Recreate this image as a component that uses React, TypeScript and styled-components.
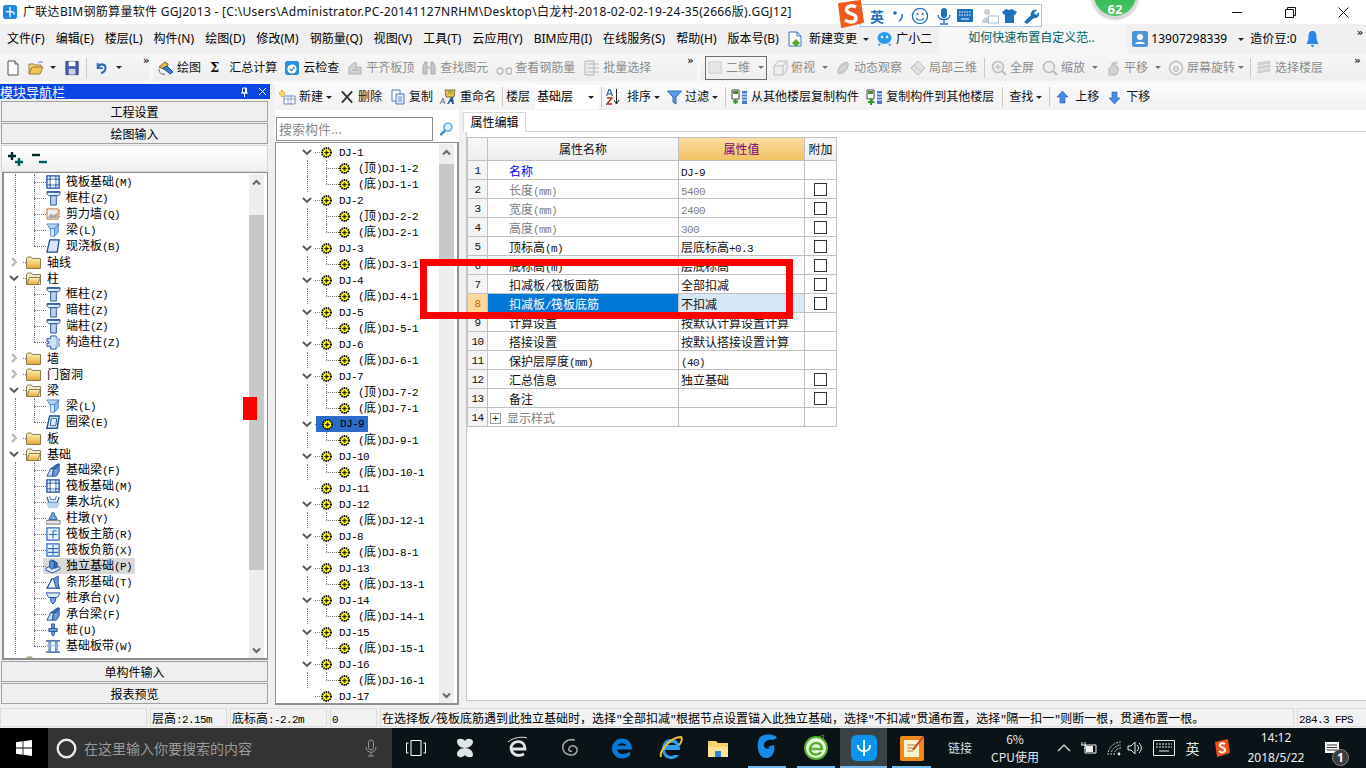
import React from "react";
import styled, { createGlobalStyle } from "styled-components";

const SANS = `"Noto Sans", "Noto Sans CJK SC", sans-serif`;
const CJK = `"Noto Sans CJK SC", sans-serif`;

const Global = createGlobalStyle`
  html, body { margin: 0; padding: 0; background: #f0f0f0; overflow: hidden; }
  #root { width: 1366px; height: 768px; }
  * { box-sizing: border-box; }
`;

const Page = styled.div`
  position: relative; width: 1366px; height: 768px; overflow: hidden; display: flex; flex-direction: column;
  background: #f0f0f0; color: #000; font: 12px/16px ${SANS};
`;

/* ---------- title ---------- */
const TitleBar = styled.div`
  height: 24px; background: #fff; display: flex; align-items: center; padding-left: 3px; white-space: nowrap; color: #111;
`;
const TitleText = styled.span`margin-left: 5px; letter-spacing: .3px; font-size: 12px;`;
const WinBtns = styled.div`margin-left: auto; display: flex;`;
const WinBtn = styled.div`width: 45px; height: 24px; display: flex; align-items: center; justify-content: center; margin-right: 8px; &:last-child{margin-right:0}`;

/* ---------- menu ---------- */
const MenuBar = styled.div`
  height: 30px; display: flex; align-items: center; padding-left: 7px; white-space: nowrap; background: #f0f0f0;
`;
const MenuItem = styled.span<{ $ml?: number }>`
  margin-left: ${p => p.$ml ?? 11}px; &:first-child { margin-left: 0; }
  display: inline-flex; align-items: center; gap: 3px; letter-spacing: .05px;
`;
const Notice = styled.div`
  width: 188px; height: 30px; margin-left: 7px; background: #f6f6f6; color: #006464; padding-left: 29px; line-height: 28px;
`;

/* ---------- toolbar row ---------- */
const ToolRow = styled.div`height: 30px; display: flex; align-items: stretch; background: #f8f8f8; padding-bottom: 3px;`;
const ToolGroup = styled.div<{ $w: number }>`
  width: ${p => p.$w}px; display: flex; align-items: center; white-space: nowrap; position: relative;
  background: linear-gradient(#f7f7f7, #eeeeee); border-radius: 0 4px 4px 0; margin-right: 3px; &:last-child { margin-right: 0; }
`;
const Tool = styled.span<{ $x: number; $off?: boolean }>`
  margin-left: ${p => p.$x}px; display: inline-flex; align-items: center; gap: 3px; flex: none;
  color: ${p => (p.$off ? "#8c8c8c" : "#111")};
`;
const Sep = styled.span<{ $x: number }>`
  margin-left: ${p => p.$x}px; width: 1px; height: 20px; background: #c8c8c8; flex: none;
`;
const More = styled.span<{ $x: number }>`margin-left: ${p => p.$x}px; font: bold 10px/10px "DejaVu Sans", sans-serif; align-self: flex-start; margin-top: 2px; color: #222; flex: none;`;
const MenuMore = styled(More)`margin-top: 0; margin-bottom: 12px; align-self: center;`;
const ComboBox = styled.span<{ $x: number }>`
  margin-left: ${p => p.$x}px; width: 62px; height: 24px; border: 1px solid #6e6e6e; display: inline-flex; align-items: center; padding-left: 2px; gap: 3px; color: #8c8c8c; flex: none;
`;
const Caret = styled.span<{ $c?: string }>`
  display: inline-block; width: 0; height: 0; border: 3px solid transparent; border-top: 3px solid ${p => p.$c ?? "#222"}; border-bottom: 0; flex: none;
`;

/* ---------- main ---------- */
const Main = styled.div`height: 622px; display: flex;`;
const NavPanel = styled.div`width: 270px; display: flex; flex-direction: column;`;
const NavHead = styled.div`
  height: 15px; background: #0a46e6; color: #fff; display: flex; align-items: center; font: 13px/15px ${CJK}; flex: none;
`;
const NavHeadBtns = styled.span`margin-left: auto; display: flex; gap: 9px; padding-right: 3px; align-items: center;`;
const NavButton = styled.div<{ $mt: number }>`
  height: 21px; margin: ${p => p.$mt}px 2px 0 1px; background: #efefef; border: 1px solid #a2a2a2; text-align: center; font: 12px/19px ${CJK}; flex: none;
`;
const NavTools = styled.div`
  height: 27px; margin: 1px 2px 0 1px; background: linear-gradient(#ffffff, #efefef); border: 1px solid #d8d8d8; display: flex; align-items: center; padding-left: 5px; gap: 7px; flex: none;
`;
const TreeBox = styled.div`
  height: 488px; margin: 0 2px 0 2px; border: 1px solid #8c8c8c; border-width: 1px 1px 2px 2px; background: #fff; display: flex; overflow: hidden; flex: none; padding-top: 1px;
`;
const TreeList = styled.div`flex: 1; min-width: 0; font: 12px/16px ${CJK}; white-space: nowrap; overflow: hidden;`;
const Row = styled.div`height: 16px; display: flex; align-items: center; flex: none;`;
const Indent = styled.span<{ $w: number }>`width: ${p => p.$w}px; flex: none;`;
const Guide = styled.span<{ $w: number; $off?: boolean }>`
  width: ${p => p.$w}px; height: 16px; flex: none; ${p => (p.$off ? "" : "border-left: 1px dotted #777;")}
`;
const Elbow = styled.span<{ $w: number; $last?: boolean }>`
  position: relative; width: ${p => p.$w}px; height: 16px; flex: none;
  &::before { content: ""; position: absolute; left: 0; top: 0; height: ${p => (p.$last ? 8 : 16)}px; border-left: 1px dotted #777; }
  &::after { content: ""; position: absolute; left: 0; top: 8px; width: 100%; border-top: 1px dotted #777; }
`;
const Stub = styled.span<{ $w: number }>`width: ${p => p.$w}px; flex: none; border-top: 1px dotted #777; height: 0;`;
const Label = styled.span<{ $ml: number }>`margin-left: ${p => p.$ml}px;`;
const SelBand = styled.span<{ $ml: number }>`
  margin-left: ${p => p.$ml}px; display: flex; align-items: center; background: #d9d9d9; height: 16px; padding: 0 3px 0 1px; gap: 5px;
`;
const Lat = styled.span`font: 11px/16px "Liberation Mono", monospace; letter-spacing: -.6px;`;
const Scroll = styled.div<{ $mr: number }>`
  position: relative; width: 15px; margin: 0 ${p => p.$mr}px 0 0; background: #eeeeee; flex: none;
`;
const Thumb = styled.div<{ $top: number; $h: number }>`
  position: absolute; left: 0; right: 0; top: ${p => p.$top}px; height: ${p => p.$h}px; background: #c8c8c8;
`;
const ScrollArrow = styled.svg<{ $top: number }>`position: absolute; left: 3px; top: ${p => p.$top}px;`;

const Right = styled.div`flex: 1; margin-left: 5px; display: flex; flex-direction: column; min-width: 0;`;
const Toolbar2 = styled.div`
  height: 26px; display: flex; align-items: center; white-space: nowrap; background: linear-gradient(#fbfbfb, #f1f1f1); flex: none;
`;
const FloorCombo = styled.span`margin-left: 5px; width: 64px; height: 24px; background: #fff; display: inline-flex; align-items: center; padding: 0 5px 0 2px; justify-content: space-between; flex: none;`;
const Content = styled.div`flex: 1; display: flex; min-height: 0;`;
const CompPanel = styled.div`width: 184px; display: flex; flex-direction: column; flex: none;`;
const SearchRow = styled.div`height: 32px; background: #fff; display: flex; align-items: flex-end; padding: 0 0 1px 1px; flex: none;`;
const SearchInput = styled.div`
  width: 157px; height: 24px; border: 1px solid #8c8c8c; color: #8a8a8a; font: 13px/22px ${CJK}; padding-left: 2px; background: #fff;
`;
const SearchBtn = styled.div`flex: 1; height: 24px; display: flex; align-items: center; justify-content: center;`;
const CompTree = styled.div`
  height: 563px; border: 1px solid #8f8f96; border-width: 1px 2px 2px 1px; background: #fff; display: flex; overflow: hidden; padding-top: 1px; flex: none;
`;
const SelName = styled.span`margin-left: -5px; background: #2d6bc9; color: #000; height: 16px; display: inline-flex; align-items: center; padding: 0 4px 0 6px; gap: 7px;`;

const PropPanel = styled.div`flex: 1; margin-left: 4px; display: flex; flex-direction: column; min-width: 0;`;
const TabLine = styled.div`height: 22px; display: flex; align-items: flex-end; background: #fff; flex: none; padding-top: 2px;`;
const Tab = styled.div`
  width: 63px; height: 20px; background: #fff; border: 1px solid #d8d8d8; border-bottom: 0; text-align: center; font: 12px/18px ${CJK}; flex: none;
`;
const TabRule = styled.div`flex: 1; border-bottom: 1px solid #d8d8d8;`;
const PropBody = styled.div`
  height: 569px; margin-left: 3px; background: #fff; border-left: 1px solid #c8c8c8; border-bottom: 1px solid #c8c8c8; padding-top: 5px; flex: none;
`;
const Grid = styled.div`
  display: grid; width: 370px; grid-template-columns: 20px 191px 126px 32px; grid-auto-rows: 19px; grid-template-rows: 23px;
  border-top: 1px solid #c0c0c0; border-left: 1px solid #c0c0c0; font: 12px/18px ${CJK};
`;
const Cell = styled.div<{ $bg?: string; $c?: string; $pl?: number; $center?: boolean }>`
  border-right: 1px solid #c0c0c0; border-bottom: 1px solid #c0c0c0; background: ${p => p.$bg ?? "#fff"}; color: ${p => p.$c ?? "#111"};
  padding-left: ${p => p.$pl ?? 0}px; padding-top: 2px; white-space: nowrap; overflow: hidden; display: flex; align-items: center;
  justify-content: ${p => (p.$center ? "center" : "flex-start")};
`;
const CheckCell = styled(Cell)`padding-top: 0;`;
const HeadCell = styled(Cell)<{ $hot?: boolean }>`
  background: ${p => (p.$hot ? "linear-gradient(#fbdda2,#f2c264)" : "linear-gradient(#f8f8f8,#eeeeee)")};
  color: ${p => (p.$hot ? "#80007a" : "#111")}; padding-top: 0;
`;
const Check = styled.span`width: 13px; height: 13px; border: 1px solid #333; background: #fff; display: block;`;
const PlusBox = styled.span`
  width: 11px; height: 11px; border: 1px solid #999; color: #222; font: 11px/9px "Liberation Sans", sans-serif; text-align: center; margin-right: 6px; flex: none;
`;

/* ---------- status ---------- */
const Status = styled.div`height: 22px; display: flex; align-items: flex-start; padding-top: 2px; gap: 3px; background: #f0f0f0; flex: none; font: 12px/17px ${CJK}; white-space: nowrap;`;
const StatusCell = styled.div<{ $w: number }>`
  width: ${p => p.$w}px; height: 19px; border: 1px solid #dcdcdc; padding-left: 1px; overflow: hidden; flex: none; background: #f2f2f2;
`;

/* ---------- taskbar ---------- */
const Taskbar = styled.div`
  height: 40px; background: #0a1418; display: flex; align-items: center; color: #e8e8e8; position: relative; flex: none;
`;
const StartBtn = styled.div`width: 48px; height: 40px; background: #000; display: flex; align-items: center; justify-content: center; flex: none;`;
const SearchBar = styled.div`
  width: 344px; height: 40px; background: #333333; display: flex; align-items: center; color: #9a9a9a; font: 14px/16px ${CJK}; padding-left: 8px; gap: 7px; flex: none;
`;
const MicBox = styled.span`margin-left: auto; margin-right: 15px; display: flex;`;
const App_ = styled.div<{ $w: number; $on?: boolean; $line?: number }>`
  width: ${p => p.$w}px; height: 40px; display: flex; align-items: center; justify-content: center; flex: none; position: relative;
  background: ${p => (p.$on ? "#3a4245" : "transparent")};
  ${p => p.$line ? `&::after{content:"";position:absolute;left:50%;bottom:0;width:${p.$line}px;margin-left:-${p.$line / 2}px;height:2px;background:#76b9ed;}` : ""}
`;
const LinkText = styled.span`margin-left: 12px; width: 24px; font: 12px/14px ${CJK}; color: #ddd; flex: none; white-space: nowrap;`;
const Cpu = styled.div`margin-left: 12px; width: 62px; text-align: center; font: 12px/18px ${CJK}; color: #e8e8e8; flex: none;`;
const Tray = styled.div`display: flex; align-items: center; margin-left: 6px; flex: none;`;
const TraySlot = styled.span<{ $w: number }>`width: ${p => p.$w}px; display: flex; justify-content: center; align-items: center; font: 14px/16px ${CJK}; flex: none;`;
const Clock = styled.div`width: 66px; text-align: center; font: 12px/20px ${SANS}; color: #eee; flex: none;`;
const Notify = styled.div`margin-left: 15px; position: relative; width: 24px; height: 30px; flex: none; padding-top: 8px;`;
const NotifyBadge = styled.span`
  position: absolute; left: 8px; top: 16px; width: 17px; height: 17px; border-radius: 50%; background: #3c3c3c; border: 1px solid #888; color: #fff; font: bold 12px/15px ${SANS}; text-align: center;
`;

/* ---------- overlays ---------- */
const RedFrame = styled.div`
  position: absolute; left: 420px; top: 259px; width: 373px; height: 60px; border: 7px solid #ff0000; pointer-events: none;
`;
const RedBlock = styled.div`position: absolute; left: 243px; top: 397px; width: 14px; height: 23px; background: #ff0000;`;
const Badge = styled.div`
  position: absolute; left: 1092px; top: -28px; width: 46px; height: 46px; border-radius: 50%; background: linear-gradient(#2aa648, #46c766);
  border: 2px solid #d8d8d8; box-shadow: 0 1px 3px #0005; color: #fff; font: bold 13px/14px ${SANS}; text-align: center; padding-top: 28px;
`;
const Sogou = styled.div`position: absolute; left: 836px; top: 0; display: flex; align-items: flex-start; height: 28px;`;
const SogouLogo = styled.span`position: relative; z-index: 1; flex: none;`;
const SogouBar = styled.div`
  margin: 4px 0 0 -4px; width: 182px; height: 23px; background: #fff; border: 1px solid #a8c6e6; display: flex; align-items: center; padding-left: 9px; color: #1f6fc0;
`;
const SogouSlot = styled.span<{ $ml?: number }>`margin-left: ${p => p.$ml ?? 0}px; display: flex; justify-content: center; font: bold 14px/16px ${CJK}; color: #1f6fc0; flex: none;`;

/* ---------- helpers ---------- */
const Mix = ({ t }: { t: string }) => (
  <>
    {t.split(/([\x00-\x7f]+)/).map((p, i) =>
      /^[\x00-\x7f]+$/.test(p) ? <Lat key={i}>{p}</Lat> : p
    )}
  </>
);

const S = ({ w = 16, h = 16, vb = "0 0 16 16", children }: any) => (
  <svg width={w} height={h} viewBox={vb} style={{ flex: "none", display: "block" }}>{children}</svg>
);

/* tree icons */
const IcColumn = () => (
  <S w={15} h={15}>
    <path d="M1 1h14v2l-2 2H3L1 3z" fill="#dfe9f8" stroke="#1d4f9f" />
    <path d="M5 5h6v10H5z" fill="#bcd2f0" stroke="#1d4f9f" />
    <path d="M1 1h14" stroke="#1d4f9f" strokeWidth="1.5" />
  </S>
);
const IcGrid = () => (
  <S w={15} h={15}>
    <path d="M1 1h13v13H1z" fill="#eef4fc" stroke="#1d4f9f" strokeWidth="1.4" />
    <path d="M4.5 1v13M10.5 1v13M1 4.5h13M1 10.5h13" stroke="#1d4f9f" />
    <path d="M5 5h5v5H5z" fill="#fff" />
  </S>
);
const IcWall = () => (
  <S w={15} h={15}>
    <path d="M1 2h12v11H1z" fill="#f4efe8" stroke="#c07030" />
    <path d="M2 12l3-5 3 2 4-3v6z" fill="#a8a8a8" />
    <path d="M14 4h1M14 7h1M14 10h1" stroke="#d07020" strokeWidth="1.5" />
  </S>
);
const IcBeam = () => (
  <S w={15} h={15}>
    <path d="M1 1h13l-3 5H4z" fill="#b8d6f4" stroke="#4a88cc" />
    <path d="M5 6h4v8H5z" fill="#e4f0fc" stroke="#4a88cc" />
    <path d="M9 6l4-5v9l-4 4z" fill="#8fbbe8" stroke="#4a88cc" />
  </S>
);
const IcSlab = () => (
  <S w={15} h={15}>
    <path d="M4 1h10l-2 13H1z" fill="#d8e6f8" stroke="#1d4f9f" strokeWidth="1.4" />
  </S>
);
const IcRing = () => (
  <S w={15} h={15}>
    <path d="M4 1h10l-2 13H1z" fill="#fff" stroke="#1d4f9f" strokeWidth="1.6" />
    <path d="M5.5 3.5h6l-1 8h-6z" fill="#dde9f8" stroke="#1d4f9f" />
  </S>
);
const IcCons = () => (
  <S w={15} h={15}>
    <path d="M5 1h6v3h3v3h-2v2h2v3h-3v3H5v-3H1V9h2V7H1V4h4z" fill="#cfe0f6" stroke="#1d4f9f" />
    <path d="M11 2l3 2v8l-3 3z" fill="#9fbfe8" />
  </S>
);
const IcFoundBeam = () => (
  <S w={15} h={15}>
    <path d="M1 14l4-8h3l-1 8z" fill="#cfe0f6" stroke="#1d4f9f" />
    <path d="M5 6l7-5h2l-3 5z" fill="#3d78c4" stroke="#1d4f9f" />
    <path d="M8 6h3l3-5v8l-3 5H7z" fill="#6b9ad6" stroke="#1d4f9f" />
  </S>
);
const IcPit = () => (
  <S w={15} h={15}>
    <path d="M1 2l2 6h9l2-6" fill="none" stroke="#2c60b0" strokeWidth="1.4" />
    <path d="M4 1l1 4h5l1-4" fill="none" stroke="#2c60b0" />
    <path d="M0 8h15l-3 6H3z" fill="#b9d2ee" />
  </S>
);
const IcPier = () => (
  <S w={15} h={15}>
    <path d="M6 2h3v3h1l2 4H3l2-4h1z" fill="#7ea8dc" stroke="#2a5ca8" />
    <path d="M0 10h15v4H0z" fill="#e4e4e4" stroke="#777" />
  </S>
);
const IcMain = () => (
  <S w={15} h={15}>
    <path d="M1 1h13v13H1z" fill="#eaf2fc" stroke="#2a6cc0" strokeWidth="1.3" />
    <path d="M3 8h9M7.5 4v8M7.5 4h4" stroke="#2a6cc0" strokeWidth="1.2" fill="none" />
  </S>
);
const IcNeg = () => (
  <S w={15} h={15}>
    <path d="M1 1h13v13H1z" fill="#eaf2fc" stroke="#2a6cc0" strokeWidth="1.3" />
    <path d="M2 6h11M2 10h11M7.5 2v11" stroke="#2a6cc0" strokeWidth="1.2" />
  </S>
);
const IcIso = () => (
  <S w={17} h={15}>
    <path d="M1 10l7-4 8 3v2l-8 4-7-3z" fill="#dbe8f8" stroke="#1d4f9f" />
    <path d="M5 2h5v7l-2.5 2L5 9z" fill="#5e90d0" stroke="#1d4f9f" />
    <path d="M7 1l6 3v5l-3 1V3z" fill="#3a6cb4" stroke="#1d4f9f" />
  </S>
);
const IcStrip = () => (
  <S w={15} h={15}>
    <path d="M1 14l4-7 1-3h3l1 3 4 7z" fill="#fff" stroke="#1d4f9f" strokeWidth="1.3" />
    <path d="M8 4l5-3v8l1 5h-3z" fill="#6b9ad6" stroke="#1d4f9f" />
  </S>
);
const IcCap = () => (
  <S w={15} h={15}>
    <path d="M0 2h15l-3 5H3z" fill="#dfe9f8" stroke="#1d4f9f" />
    <path d="M5 7h5v4l-2.5 3L5 11z" fill="#7ea8dc" stroke="#1d4f9f" />
  </S>
);
const IcPile = () => (
  <S w={15} h={15}>
    <path d="M6 1h3v4H6zM3 6h9v3H3zM6 9h3v3l-1.5 2L6 12z" fill="#7ea8dc" stroke="#1d4f9f" />
  </S>
);
const IcBand = () => (
  <S w={15} h={15}>
    <path d="M0 2h15M0 14h15" stroke="#1d4f9f" strokeWidth="1.4" />
    <path d="M3 3h2v10H3zM10 3h2v10h-2z" fill="#8fb4e4" stroke="#2a5ca8" strokeWidth=".6" />
    <path d="M1 7h13" stroke="#8fb4e4" />
  </S>
);
const Folder = ({ open }: { open?: boolean }) => (
  <S w={15} h={13} vb="0 0 15 13">
    <defs>
      <linearGradient id="fg" x1="0" y1="0" x2="0" y2="1">
        <stop offset="0" stopColor="#fff3c0" />
        <stop offset="1" stopColor="#e8a92c" />
      </linearGradient>
    </defs>
    <path d="M.5 12.5V2.5l1-1.5h4l1 1.5h8v10z" fill={open ? "#f4e8c8" : "url(#fg)"} stroke="#8a7a58" />
    {open && <path d="M.5 12.5l3-7h11l-3 7z" fill="url(#fg)" stroke="#8a7a58" />}
  </S>
);
const ChevR = () => (
  <S w={10} h={10} vb="0 0 10 10"><path d="M3 1l4 4-4 4" fill="none" stroke="#b4b4b4" strokeWidth="2" /></S>
);
const ChevD = () => (
  <S w={10} h={10} vb="0 0 10 10"><path d="M1 3l4 4 4-4" fill="none" stroke="#555" strokeWidth="1.8" /></S>
);
const Gear = () => (
  <S w={11} h={11} vb="0 0 11 11">
    <circle cx="5.5" cy="5.5" r="4.5" fill="#ffff00" stroke="#000" strokeWidth="1.8" strokeDasharray="1.4 .8" />
    <circle cx="5.5" cy="5.5" r="1.6" fill="#333" />
    <path d="M5.5 1v9M1 5.5h9" stroke="#000" strokeWidth=".6" strokeDasharray="1 1" />
  </S>
);

const icons: Record<string, () => React.JSX.Element> = {
  col: IcColumn, grid: IcGrid, wall: IcWall, beam: IcBeam, slab: IcSlab, ring: IcRing, cons: IcCons, fb: IcFoundBeam,
  pit: IcPit, pier: IcPier, main: IcMain, neg: IcNeg, iso: IcIso, strip: IcStrip, cap: IcCap, pile: IcPile, band: IcBand,
};

type NavRow = { f?: "open" | "closed"; t: string; i?: string; last?: boolean; sel?: boolean };
const navRows: NavRow[] = [
  { t: "筏板基础(M)", i: "grid" }, { t: "框柱(Z)", i: "col" }, { t: "剪力墙(Q)", i: "wall" }, { t: "梁(L)", i: "beam" }, { t: "现浇板(B)", i: "slab", last: true },
  { f: "closed", t: "轴线" }, { f: "open", t: "柱" },
  { t: "框柱(Z)", i: "col" }, { t: "暗柱(Z)", i: "col" }, { t: "端柱(Z)", i: "col" }, { t: "构造柱(Z)", i: "cons", last: true },
  { f: "closed", t: "墙" }, { f: "closed", t: "门窗洞" }, { f: "open", t: "梁" },
  { t: "梁(L)", i: "beam" }, { t: "圈梁(E)", i: "ring", last: true },
  { f: "closed", t: "板" }, { f: "open", t: "基础" },
  { t: "基础梁(F)", i: "fb" }, { t: "筏板基础(M)", i: "grid" }, { t: "集水坑(K)", i: "pit" }, { t: "柱墩(Y)", i: "pier" }, { t: "筏板主筋(R)", i: "main" }, { t: "筏板负筋(X)", i: "neg" },
  { t: "独立基础(P)", i: "iso", sel: true }, { t: "条形基础(T)", i: "strip" }, { t: "桩承台(V)", i: "cap" }, { t: "承台梁(F)", i: "fb" }, { t: "桩(U)", i: "pile" }, { t: "基础板带(W)", i: "band", last: true },
  { f: "closed", t: "" },
];

const compRows: [string, string[]][] = [
  ["DJ-1", ["(顶)DJ-1-2", "(底)DJ-1-1"]], ["DJ-2", ["(顶)DJ-2-2", "(底)DJ-2-1"]], ["DJ-3", ["(底)DJ-3-1"]], ["DJ-4", ["(底)DJ-4-1"]],
  ["DJ-5", ["(底)DJ-5-1"]], ["DJ-6", ["(底)DJ-6-1"]], ["DJ-7", ["(顶)DJ-7-2", "(底)DJ-7-1"]], ["DJ-9", ["(底)DJ-9-1"]], ["DJ-10", ["(底)DJ-10-1"]],
  ["DJ-11", []], ["DJ-12", ["(底)DJ-12-1"]], ["DJ-8", ["(底)DJ-8-1"]], ["DJ-13", ["(底)DJ-13-1"]], ["DJ-14", ["(底)DJ-14-1"]], ["DJ-15", ["(底)DJ-15-1"]],
  ["DJ-16", ["(底)DJ-16-1"]], ["DJ-17", []],
];

type P = { n: number; name: string; val: string; chk?: boolean; c?: string; valc?: string; plus?: boolean; sel?: boolean };
const props: P[] = [
  { n: 1, name: "名称", val: "DJ-9", c: "#0000ff" },
  { n: 2, name: "长度(mm)", val: "5400", chk: true, c: "#808080", valc: "#808080" },
  { n: 3, name: "宽度(mm)", val: "2400", chk: true, c: "#808080", valc: "#808080" },
  { n: 4, name: "高度(mm)", val: "300", chk: true, c: "#808080", valc: "#808080" },
  { n: 5, name: "顶标高(m)", val: "层底标高+0.3", chk: true },
  { n: 6, name: "底标高(m)", val: "层底标高", chk: true },
  { n: 7, name: "扣减板/筏板面筋", val: "全部扣减", chk: true },
  { n: 8, name: "扣减板/筏板底筋", val: "不扣减", chk: true, sel: true },
  { n: 9, name: "计算设置", val: "按默认计算设置计算" },
  { n: 10, name: "搭接设置", val: "按默认搭接设置计算" },
  { n: 11, name: "保护层厚度(mm)", val: "(40)" },
  { n: 12, name: "汇总信息", val: "独立基础", chk: true },
  { n: 13, name: "备注", val: "", chk: true },
  { n: 14, name: "显示样式", val: "", c: "#808080", plus: true },
];

/* toolbar icons */
const Doc = () => <S><path d="M3 1h7l3 3v11H3z" fill="#fff" stroke="#555" /><path d="M10 1v3h3" fill="#ddd" stroke="#555" /></S>;
const OpenF = () => <S w={18}><path d="M1 14V4h5l1 1h6v2" fill="#f0d890" stroke="#9a7a30" /><path d="M1 14l3-7h11l-3 7z" fill="#f2c454" stroke="#9a7a30" /><path d="M10 3c2-2 4-1 5 0" stroke="#3a7ac8" fill="none" /></S>;
const Save = () => <S w={15}><path d="M1 1h13v14H1z" fill="#4a5fb0" stroke="#2c3a80" /><path d="M4 1h7v5H4z" fill="#fff" /><path d="M4 9h7v6H4z" fill="#c8d0e8" /></S>;
const Undo = () => <S w={14}><path d="M3 2v6h6" fill="none" stroke="#2c6cc0" strokeWidth="2" /><path d="M3 8c2-6 9-5 9 0 0 3-2 5-5 6" fill="none" stroke="#2c6cc0" strokeWidth="2.4" /></S>;
const DrawI = () => <S w={18}><path d="M2 7l6-5 3 2-2 6z" fill="#e4b84c" stroke="#7a6020" /><path d="M6 8l7 6 3-2-6-6z" fill="#3d78c8" stroke="#1d4f9f" /><path d="M2 9c0 4 3 6 6 5" fill="none" stroke="#555" /></S>;
const CloudI = () => <S><rect x="1" y="1" width="14" height="14" rx="2" fill="#2e90dc" /><circle cx="8" cy="9" r="4.6" fill="#fff" /><path d="M5.8 9l1.6 1.6L10.5 7" fill="none" stroke="#2e90dc" strokeWidth="1.4" /></S>;
const Grey1 = () => <S><path d="M2 14V7l6-5 2 2-2 3h6v7z" fill="#d4d4d4" stroke="#b0b0b0" /><path d="M5 10h7" stroke="#aaa" /></S>;
const Binoc = () => <S><path d="M2 14V6l2-4h2v12zM10 14V2h2l2 4v8z" fill="#c8c8c8" stroke="#aaa" /><path d="M6 6h4v3H6z" fill="#ccc" /></S>;
const Glasses = () => <S><path d="M1 11a3 3 0 106 0 3 3 0 10-6 0M10 11a3 3 0 106 0 3 3 0 10-6 0" fill="none" stroke="#b8b8b8" strokeWidth="1.3" /></S>;
const Batch = () => <S><path d="M1 1h9v14H1z" fill="#eee" stroke="#b4b4b4" /><path d="M3 4h12M3 8h12M3 12h12" stroke="#bbb" /></S>;
const Cube = () => <S><path d="M2 6h9v9H2zM2 6l4-5h9l-4 5M11 15l4-5V1" fill="#eee" stroke="#bdbdbd" /></S>;
const Orbit = () => <S><ellipse cx="8" cy="8" rx="3.5" ry="7" transform="rotate(40 8 8)" fill="#d6d6d6" stroke="#b8b8b8" /><ellipse cx="8" cy="8" rx="6" ry="2" transform="rotate(-40 8 8)" fill="none" stroke="#c4c4c4" /></S>;
const Local = () => <S><path d="M1 8l7-7 7 7-7 7z" fill="#e2e2e2" stroke="#b8b8b8" /><path d="M4 5l7 7M8 1l7 7" stroke="#c4c4c4" /></S>;
const Mag = ({ p }: { p?: boolean }) => <S><circle cx="7" cy="7" r="5.5" fill="#eee" stroke="#b8b8b8" strokeWidth="1.4" /><path d="M11 11l4 4" stroke="#b8b8b8" strokeWidth="2" />{p && <path d="M4 7h6M7 4v6" stroke="#b4b4b4" />}</S>;
const Pan = () => <S><path d="M4 15V8l3-2V3l2 0 1 3 3 1v5l-2 3z" fill="#d2d2d2" stroke="#b4b4b4" /><path d="M11 1v4M9 3h4" stroke="#bbb" /></S>;
const Rot = () => <S><circle cx="8" cy="8" r="6.5" fill="#f2f2f2" stroke="#bcbcbc" strokeWidth="1.4" /><circle cx="8" cy="9" r="2.6" fill="#ddd" stroke="#bbb" /></S>;
const Floors = () => <S><path d="M2 11l12-2v2L2 13zM2 7l12-2v2L2 9zM2 3l12-2v2L2 5z" fill="#dadada" stroke="#bdbdbd" strokeWidth=".7" /></S>;
const NewI = () => <S w={18} vb="0 0 18 16"><path d="M6 7h11v8H6z" fill="#fff" stroke="#6a86b8" /><path d="M6 10h11M10 7v8M13 7v8" stroke="#6a86b8" strokeWidth=".7" /><path d="M4 1v7M1 4.5h6" stroke="#e8b020" strokeWidth="2.4" /><path d="M4 2v5M2 4.5h4" stroke="#ffe890" /></S>;
const DelI = () => <S w={15}><path d="M2 2l11 12M13 2L2 14" stroke="#333" strokeWidth="2" /></S>;
const CopyI = () => <S><path d="M2 1h8v11H2z" fill="#fff" stroke="#4b76b8" /><path d="M6 5h8v10H6z" fill="#e4eefa" stroke="#4b76b8" /><path d="M8 8h4M8 10h4M8 12h4" stroke="#4b76b8" strokeWidth=".8" /></S>;
const RenameI = () => <S w={18} vb="0 0 18 16"><path d="M6 1h10l-1 7H7z" fill="#e8c04c" stroke="#8a7030" /><path d="M9 2h5M9 4h5" stroke="#7a9a30" /><path d="M1 15l3-6 2 6M2 13h3" fill="none" stroke="#777" /><path d="M8 15l4-7h2l1 7h-2l-.2-2h-2l-1 2z" fill="#2c5ca8" /></S>;
const Sort = () => <S w={14} vb="0 0 14 16"><path d="M.5 7L3 .5h1L6.5 7M1.5 5h4" fill="none" stroke="#2c5ca8" strokeWidth="1.2" /><path d="M1 9h5L1 15h5" fill="none" stroke="#b03020" strokeWidth="1.4" /><path d="M10.5 0v14M8 11l2.5 4 2.5-4" fill="none" stroke="#222" /></S>;
const Funnel = () => <S w={15} h={16} vb="0 0 14 16"><path d="M0 2h14L8.5 8v7l-3-2V8z" fill="#5a9ce8" stroke="#2c6cc0" /></S>;
const CopyFrom = ({ flip }: { flip?: boolean }) => <S w={17} vb="0 0 17 16"><path d="M1 1h7v9H1z" fill="#fff" stroke="#444" /><path d="M2 2h5v3H2z" fill="#4a8a3c" /><path d="M11 2h5v13h-5z" fill="#4a7ac8" /><path d="M11 5h5M11 8h5M11 11h5" stroke="#fff" /><path d={flip ? "M2 13h5l-2-2v5" : "M4.5 10v5M2 12.5h5"} stroke="#2a9a2a" strokeWidth="2" fill="none" /></S>;
const Arrow = ({ down }: { down?: boolean }) => <S w={11} h={13} vb="0 0 11 13"><path d={down ? "M3 1h5v6h3l-5.5 6L0 7h3z" : "M3 12h5V6h3L5.5 0 0 6h3z"} fill="#4a8ae0" stroke="#2a5ca8" strokeWidth=".6" /></S>;
const NewDoc = () => <S w={16}><path d="M2 1h8l4 4v10H2z" fill="#fff" stroke="#3a78c8" /><path d="M10 1v4h4" fill="none" stroke="#3a78c8" /><path d="M9 8l4 4-4 4-4-4z" fill="#58a828" /></S>;
const Bot = () => <S w={17} vb="0 0 17 16"><ellipse cx="8.5" cy="7" rx="7" ry="6" fill="#2a9ae8" /><path d="M3 12l-1 3 3-1M14 12l1 3-3-1" fill="#2a9ae8" /><circle cx="6" cy="6" r="1.2" fill="#fff" /><circle cx="11" cy="6" r="1.2" fill="#fff" /></S>;
const UserI = () => <S><rect width="16" height="16" rx="2" fill="#4b94d8" /><circle cx="8" cy="6" r="3" fill="#fff" /><path d="M3 13c1-3 9-3 10 0z" fill="#fff" /></S>;
const Bell = () => <S w={13} h={18} vb="0 0 13 18"><path d="M6.5 1c-3 0-4 2-4 6 0 3-1 5-2 7h12c-1-2-2-4-2-7 0-4-1-6-4-6z" fill="#2a86e8" /><path d="M4.5 15h4l-2 2.5z" fill="#2a86e8" /></S>;
const SearchI = () => <S w={15} h={15}><circle cx="9.5" cy="5.5" r="4.2" fill="#e8f4fc" stroke="#5ab0e8" strokeWidth="1.8" /><path d="M6.5 9L1.5 14" stroke="#2b80d0" strokeWidth="2.4" /></S>;

const NavRowView = ({ r, guide }: { r: NavRow; guide: boolean }) => {
  if (r.f) {
    return (
      <Row>
        <Indent $w={5} />
        {r.f === "open" ? <ChevD /> : <ChevR />}
        <Indent $w={4} />
        <Stub $w={3} />
        <Folder open={r.f === "open"} />
        {r.t && <Label $ml={6}>{r.t}</Label>}
      </Row>
    );
  }
  const I = icons[r.i!];
  return (
    <Row>
      <Indent $w={11} />
      <Guide $w={19} $off={!guide} />
      <Elbow $w={12} $last={r.last} />
      {r.sel ? (
        <SelBand $ml={-3}><I /><span><Mix t={r.t} /></span></SelBand>
      ) : (
        <>
          <I />
          <Label $ml={5}><Mix t={r.t} /></Label>
        </>
      )}
    </Row>
  );
};

const CompTreeRows = () => (
  <TreeList>
    {compRows.map(([name, kids]) => (
      <React.Fragment key={name}>
        <Row>
          <Indent $w={26} />
          {kids.length > 0 ? <ChevD /> : <Indent $w={10} />}
          <Indent $w={3} />
          <Stub $w={5} />
          <Indent $w={1} />
          {name === "DJ-9" ? (
            <SelName><Gear /><Lat>{name}</Lat></SelName>
          ) : (
            <>
              <Gear />
              <Label $ml={7}><Lat>{name}</Lat></Label>
            </>
          )}
        </Row>
        {kids.map((k, i) => (
          <Row key={k}>
            <Indent $w={31} />
            <Guide $w={19} />
            <Elbow $w={13} $last={i === kids.length - 1} />
            <Gear />
            <Label $ml={8}><Mix t={k} /></Label>
          </Row>
        ))}
      </React.Fragment>
    ))}
  </TreeList>
);

const Up = ({ top }: { top: number }) => (
  <ScrollArrow $top={top} width="9" height="7" viewBox="0 0 9 7"><path d="M1 5.5l3.5-3.5L8 5.5" fill="none" stroke="#666" strokeWidth="2" /></ScrollArrow>
);
const Down = ({ top }: { top: number }) => (
  <ScrollArrow $top={top} width="9" height="7" viewBox="0 0 9 7"><path d="M1 1.5L4.5 5 8 1.5" fill="none" stroke="#666" strokeWidth="2" /></ScrollArrow>
);

export default function App() {
  let navGuide = false;
  return (
    <Page>
      <Global />
      <TitleBar>
        <S w={15} h={15}><rect width="15" height="15" rx="3" fill="#1e88e0" /><path d="M7.5 2v11M3 7h4M8 7c3 0 4 1 4 3" stroke="#fff" strokeWidth="1.4" fill="none" /></S>
        <TitleText>广联达BIM钢筋算量软件 GGJ2013 - [C:\Users\Administrator.PC-20141127NRHM\Desktop\白龙村-2018-02-02-19-24-35(2666版).GGJ12]</TitleText>
        <WinBtns>
          <WinBtn><S w={11} h={11} vb="0 0 11 11"><path d="M0 5.5h10" stroke="#111" /></S></WinBtn>
          <WinBtn><S w={11} h={11} vb="0 0 11 11"><path d="M.5 2.5h8v8h-8zM2.5 2.5v-2h8v8h-2" fill="none" stroke="#111" /></S></WinBtn>
          <WinBtn><S w={11} h={11} vb="0 0 11 11"><path d="M.5.5l10 10M10.5.5l-10 10" stroke="#111" /></S></WinBtn>
        </WinBtns>
      </TitleBar>

      <MenuBar>
        {["文件(F)", "编辑(E)", "楼层(L)", "构件(N)", "绘图(D)", "修改(M)", "钢筋量(Q)", "视图(V)", "工具(T)", "云应用(Y)", "BIM应用(I)", "在线服务(S)", "帮助(H)", "版本号(B)"].map(m => (
          <MenuItem key={m}>{m}</MenuItem>
        ))}
        <MenuItem $ml={8}><NewDoc /><Indent $w={0} />新建变更<Indent $w={0} /><Caret /></MenuItem>
        <MenuItem $ml={7}><Bot />广小二</MenuItem>
        <Notice>如何快速布置自定义范..</Notice>
        <MenuItem $ml={5}><UserI />13907298339<Indent $w={5} /><Caret /></MenuItem>
        <MenuItem $ml={6}>造价豆:0</MenuItem>
        <MenuItem $ml={9}><Bell /></MenuItem>
        <MenuMore $x={38}>»</MenuMore>
      </MenuBar>

      <ToolRow>
        <ToolGroup $w={150}>
          <Tool $x={5}><Doc /></Tool>
          <Tool $x={6}><OpenF /></Tool>
          <Tool $x={5}><Caret /></Tool>
          <Tool $x={9}><Save /></Tool>
          <Sep $x={6} />
          <Tool $x={8}><Undo /></Tool>
          <Tool $x={7}><Caret /></Tool>
          <More $x={21}>»</More>
        </ToolGroup>
        <ToolGroup $w={544}>
          <Tool $x={3}><DrawI />绘图</Tool>
          <Tool $x={9}><b style={{ fontFamily: "DejaVu Serif", fontSize: 13 }}>Σ</b><Indent $w={4} />汇总计算</Tool>
          <Tool $x={7}><CloudI />云检查</Tool>
          <Tool $x={8} $off><Grey1 />平齐板顶</Tool>
          <Tool $x={7} $off><Binoc />查找图元</Tool>
          <Tool $x={8} $off><Glasses />查看钢筋量</Tool>
          <Tool $x={9} $off><Batch />批量选择</Tool>
          <More $x={36}>»</More>
        </ToolGroup>
        <ToolGroup $w={666}>
          <ComboBox $x={5}><S w={15} h={15}><rect x="1" y="2" width="13" height="12" fill="#e6e6e6" stroke="#ccc" /></S>二维<Indent $w={2} /><Caret $c="#777" /></ComboBox>
          <Tool $x={5} $off><Cube />俯视<Indent $w={1} /><Caret $c="#777" /></Tool>
          <Tool $x={7} $off><Orbit />动态观察</Tool>
          <Tool $x={8} $off><Local />局部三维</Tool>
          <Sep $x={7} />
          <Tool $x={6} $off><Mag p />全屏</Tool>
          <Tool $x={8} $off><Mag />缩放<Indent $w={1} /><Caret $c="#777" /></Tool>
          <Tool $x={7} $off><Pan />平移<Indent $w={1} /><Caret $c="#777" /></Tool>
          <Tool $x={7} $off><Rot />屏幕旋转<Caret $c="#777" /></Tool>
          <Sep $x={6} />
          <Tool $x={5} $off><Floors />选择楼层</Tool>
          <More $x={31}>»</More>
        </ToolGroup>
      </ToolRow>

      <Main>
        <NavPanel>
          <NavHead>
            模块导航栏
            <NavHeadBtns>
              <S w={9} h={10} vb="0 0 9 10"><path d="M2.5 1h4v5h-4zM1 6h7M4.5 6v4M5.5 1v5" fill="none" stroke="#fff" /></S>
              <S w={9} h={9} vb="0 0 9 9"><path d="M1 1l7 7M8 1L1 8" stroke="#fff" /></S>
            </NavHeadBtns>
          </NavHead>
          <NavButton $mt={2}>工程设置</NavButton>
          <NavButton $mt={1}>绘图输入</NavButton>
          <NavTools>
            <S w={17} h={15} vb="0 0 17 15"><path d="M5 1v8M1 5h8" stroke="#002c2c" strokeWidth="2.4" /><path d="M12 7v8M8 11h8" stroke="#006060" strokeWidth="2.4" /></S>
            <S w={17} h={15} vb="0 0 17 15"><path d="M1 4h8" stroke="#002c2c" strokeWidth="2.4" /><path d="M8 11h8" stroke="#006060" strokeWidth="2.4" /></S>
          </NavTools>
          <TreeBox>
            <TreeList>
              {navRows.map((r, i) => {
                if (r.f) navGuide = r.f === "open";
                const g = i < 5 ? true : navGuide;
                return <NavRowView key={i} r={r} guide={g} />;
              })}
            </TreeList>
            <Scroll $mr={3}>
              <Thumb $top={41} $h={355} />
              <Up top={5} />
              <Down top={473} />
            </Scroll>
          </TreeBox>
          <NavButton $mt={1}>单构件输入</NavButton>
          <NavButton $mt={1}>报表预览</NavButton>
        </NavPanel>

        <Right>
          <Toolbar2>
            <Tool $x={3}><NewI />新建<Caret /></Tool>
            <Tool $x={8}><DelI />删除</Tool>
            <Tool $x={8}><CopyI />复制</Tool>
            <Tool $x={6}><RenameI />重命名</Tool>
            <Sep $x={6} />
            <Tool $x={3}>楼层</Tool>
            <FloorCombo>基础层<Caret /></FloorCombo>
            <Sep $x={2} />
            <Tool $x={4}><Sort /><Indent $w={1} />排序<Caret /></Tool>
            <Tool $x={7}><Funnel />过滤<Caret /></Tool>
            <Sep $x={7} />
            <Tool $x={5}><CopyFrom />从其他楼层复制构件</Tool>
            <Tool $x={7}><CopyFrom flip />复制构件到其他楼层</Tool>
            <Sep $x={8} />
            <Tool $x={6}>查找<Caret /></Tool>
            <Sep $x={7} />
            <Tool $x={7}><Arrow /><Indent $w={1} />上移</Tool>
            <Tool $x={10}><Arrow down /><Indent $w={0} />下移</Tool>
          </Toolbar2>
          <Content>
            <CompPanel>
              <SearchRow>
                <SearchInput>搜索构件...</SearchInput>
                <SearchBtn><SearchI /></SearchBtn>
              </SearchRow>
              <CompTree>
                <CompTreeRows />
                <Scroll $mr={3}>
                  <Thumb $top={20} $h={95} />
                  <Up top={5} />
                  <Down top={548} />
                </Scroll>
              </CompTree>
            </CompPanel>
            <PropPanel>
              <TabLine>
                <Tab>属性编辑</Tab>
                <TabRule />
              </TabLine>
              <PropBody>
                <Grid>
                  <HeadCell />
                  <HeadCell $center>属性名称</HeadCell>
                  <HeadCell $center $hot>属性值</HeadCell>
                  <HeadCell $center>附加</HeadCell>
                  {props.map(p => (
                    <React.Fragment key={p.n}>
                      <Cell $center $bg={p.sel ? "#ffd79c" : "#f4f4f4"} $c={p.sel ? "#c86400" : "#111"}><Lat>{p.n}</Lat></Cell>
                      <Cell $pl={p.plus ? 2 : 21} $bg={p.sel ? "#0078d7" : "#fff"} $c={p.sel ? "#fff" : p.c}>
                        {p.plus && <PlusBox>+</PlusBox>}
                        <span><Mix t={p.name} /></span>
                      </Cell>
                      <Cell $pl={2} $bg={p.sel ? "#d6e8f8" : "#fff"} $c={p.valc}><span><Mix t={p.val} /></span></Cell>
                      <CheckCell $center>{p.chk && <Check />}</CheckCell>
                    </React.Fragment>
                  ))}
                </Grid>
              </PropBody>
            </PropPanel>
          </Content>
        </Right>
      </Main>

      <Status>
        <StatusCell $w={147} />
        <StatusCell $w={77}><Mix t="层高:2.15m" /></StatusCell>
        <StatusCell $w={97}><Mix t="底标高:-2.2m" /></StatusCell>
        <StatusCell $w={47}><Lat>0</Lat></StatusCell>
        <StatusCell $w={914}><Mix t={'在选择板/筏板底筋遇到此独立基础时，选择"全部扣减"根据节点设置锚入此独立基础，选择"不扣减"贯通布置，选择"隔一扣一"则断一根，贯通布置一根。'} /></StatusCell>
        <StatusCell $w={72}><Lat>284.3 FPS</Lat></StatusCell>
      </Status>

      <Taskbar>
        <StartBtn><S w={16} h={16}><path d="M0 2.2l6.6-.9v6.3H0zM7.4 1.2L16 0v7.6H7.4zM0 8.4h6.6v6.3L0 13.8zM7.4 8.4H16V16l-8.6-1.2z" fill="#fff" /></S></StartBtn>
        <SearchBar>
          <S w={21} h={21} vb="0 0 21 21"><circle cx="10.5" cy="10.5" r="8.8" fill="none" stroke="#e8e8e8" strokeWidth="2.4" /></S>
          在这里输入你要搜索的内容
          <MicBox><S w={12} h={18} vb="0 0 12 18"><rect x="3.5" y="1" width="5" height="10" rx="2.5" fill="none" stroke="#999" /><path d="M1 8c0 7 10 7 10 0M6 13v4M3 17h6" fill="none" stroke="#999" /></S></MicBox>
        </SearchBar>
        <App_ $w={48}><S w={20} h={16} vb="0 0 20 16"><path d="M5 .5h10v15H5zM2.5 3H.5v10h2M17.5 3h2v10h-2" fill="none" stroke="#fff" /></S></App_>
        <App_ $w={50}><S w={22} h={22} vb="0 0 22 22"><path d="M11 11C6 11 3 8 3 4c0-3 6-3 8 0 1-3 8-3 8 1 0 3-4 6-8 6zM11 11c5 0 8 3 8 7 0 3-6 3-8 0-2 3-8 3-8-1 0-3 3-6 8-6z" fill="#e0e4e6" /></S></App_>
        <App_ $w={55}><S w={22} h={24} vb="0 0 22 24"><path d="M4 13h14c0-9-11-10-14-2 0 8 7 10 13 7" fill="none" stroke="#e4e4e4" strokeWidth="2.8" /><path d="M1 6c4-4 14-6 19-4" fill="none" stroke="#e4e4e4" /></S></App_>
        <App_ $w={50}><S w={20} h={22} vb="0 0 20 22"><path d="M15 3C6 1 2 7 3 12c2 7 12 8 14 2 1-5-6-7-8-3-1 2 1 4 3 3" fill="none" stroke="#a0a0a0" strokeWidth="1.6" /></S></App_>
        <App_ $w={54}><S w={24} h={24} vb="0 0 24 24"><path d="M7 13.5h15c0-7-4-11-10-11-6 0-10 5-10 10 0 6 5 10 10 10 3 0 6-1 8-3v-4c-4 3-12 4-13-2zM7.5 9.5c1-3 8-3 9 0z" fill="#0a78d7" fillRule="evenodd" /></S></App_>
        <App_ $w={44}><S w={24} h={26} vb="0 0 24 26"><path d="M6 15h15c0-8-4-11-9-11-6 0-9 5-9 10 0 6 4 10 9 10 4 0 7-2 8-4h-5c-3 2-8 1-9-5zM7 10c1-3 9-3 10 0z" fill="#2ca0e8" fillRule="evenodd" /><path d="M2 22C0 16 12 2 22 2c2 2 0 6-2 8" fill="none" stroke="#f2c230" strokeWidth="2" /></S></App_>
        <App_ $w={49}><S w={22} h={20} vb="0 0 22 20"><path d="M1 3h8l2 2h10v14H1z" fill="#f6d26a" /><path d="M1 9h20v10H1z" fill="#fbe39a" /><path d="M8 19v-6h6v6z" fill="#2a88d8" /></S></App_>
        <App_ $w={49} $line={38}><S w={24} h={28} vb="0 0 24 28"><path d="M5 3c5-4 16-3 17 1l-4 2c-3-1-8 0-9 4-1 4 3 6 6 4-1-1-3-1-3-1l7-2c2 8-3 14-9 13C2 23 1 8 5 3z" fill="#1a8ae8" /></S></App_>
        <App_ $w={49} $line={38}><S w={24} h={28} vb="0 0 24 28"><circle cx="12" cy="14" r="11" fill="#eaf6e0" stroke="#58b030" strokeWidth="2" /><path d="M6 15h12c0-8-11-8-12 0 0 6 8 7 11 3" fill="none" stroke="#58b030" strokeWidth="2.6" /><path d="M14 3l6-2-1 5" fill="none" stroke="#3a8a20" /></S></App_>
        <App_ $w={47} $on $line={47}><S w={26} h={28} vb="0 0 26 28"><rect y="1" width="26" height="26" rx="6" fill="#0a96f0" /><path d="M13 6v16M7 11c0 5 2 6 6 6 4 0 6-1 6-6" fill="none" stroke="#fff" strokeWidth="2" /></S></App_>
        <App_ $w={49} $line={39}><S w={26} h={28} vb="0 0 26 28"><rect x="1" y="2" width="24" height="25" rx="2" fill="#f08a1e" /><path d="M5 6h15v17H5z" fill="#fff3d0" /><path d="M8 11h9M8 14h9M8 17h6" stroke="#b08040" /><path d="M14 16L24 3" stroke="#d04020" strokeWidth="2" /></S></App_>
        <LinkText>链接</LinkText>
        <Cpu>6%<br />CPU使用</Cpu>
        <Tray>
          <TraySlot $w={24}><S w={14} h={8} vb="0 0 14 8"><path d="M1 7l6-6 6 6" fill="none" stroke="#eee" strokeWidth="1.2" /></S></TraySlot>
          <TraySlot $w={26}><S w={18} h={14} vb="0 0 18 14"><path d="M5 4h11v8H5z" fill="none" stroke="#eee" /><path d="M6 5h7v6H6z" fill="#eee" /><path d="M2 1v3M5 1v3M1 4h5v2l-2 2" stroke="#eee" fill="none" /></S></TraySlot>
          <TraySlot $w={25}><S w={15} h={15} vb="0 0 15 15"><path d="M1 14a13 13 0 0113-13M4 14a10 10 0 0110-10M7 14a7 7 0 017-7" fill="none" stroke="#ccc" strokeDasharray="2 1" /><circle cx="12" cy="13" r="1.4" fill="#eee" /></S></TraySlot>
          <TraySlot $w={16}><S w={16} h={16} vb="0 0 16 16"><path d="M1 6h3l4-4v12l-4-4H1z" fill="none" stroke="#eee" /><path d="M10 5c2 2 2 4 0 6M12 3c3 3 3 7 0 10" fill="none" stroke="#eee" /></S></TraySlot>
          <TraySlot $w={42}><S w={22} h={16} vb="0 0 22 16"><path d="M.5 .5h21v15H.5z" fill="none" stroke="#eee" /><path d="M3 4h16M3 7h16" stroke="#eee" strokeDasharray="2 1" /><path d="M6 11h10" stroke="#eee" /></S></TraySlot>
          <TraySlot $w={15}>英</TraySlot>
          <TraySlot $w={43}><S w={16} h={18} vb="0 0 16 18"><path d="M1 3l13-3 2 14-13 4z" fill="#f0521c" /><path d="M11 5c-3-2-6 0-5 2s5 1 5 4-4 3-6 1" fill="none" stroke="#fff" strokeWidth="2" /></S></TraySlot>
        </Tray>
        <Clock>14:12<br />2018/5/22</Clock>
        <Notify>
          <S w={16} h={16}><path d="M1 1h14v11H1z" fill="#fff" /><path d="M3 4h10M3 6.5h10M3 9h10" stroke="#333" /></S>
          <NotifyBadge>1</NotifyBadge>
        </Notify>
      </Taskbar>

      <RedBlock />
      <RedFrame />
      <Badge>62</Badge>
      <Sogou>
        <SogouLogo>
          <S w={28} h={28} vb="0 0 28 28"><path d="M3 4l21-3 3 21-21 5z" fill="#f05a1e" stroke="#f05a1e" strokeWidth="2" strokeLinejoin="round" /><path d="M20 7c-5-3-11 0-9 4s9 2 9 7-7 5-11 2" fill="none" stroke="#fff" strokeWidth="3.4" /></S>
        </SogouLogo>
        <SogouBar>
          <SogouSlot>英</SogouSlot>
          <SogouSlot $ml={8}><S w={12} h={14} vb="0 0 12 14"><circle cx="3" cy="4" r="1.8" fill="#1f6fc0" /><path d="M10 5c1 3-1 6-3 7" fill="none" stroke="#1f6fc0" strokeWidth="1.6" /></S></SogouSlot>
          <SogouSlot $ml={7}><S w={18} h={18} vb="0 0 18 18"><circle cx="9" cy="9" r="7.6" fill="none" stroke="#1f6fc0" strokeWidth="1.4" /><circle cx="6.5" cy="7" r="1" fill="#1f6fc0" /><circle cx="11.5" cy="7" r="1" fill="#1f6fc0" /><path d="M5 11c2 3 6 3 8 0" fill="none" stroke="#1f6fc0" strokeWidth="1.2" /></S></SogouSlot>
          <SogouSlot $ml={8}><S w={14} h={18} vb="0 0 14 18"><rect x="4" y="1" width="6" height="10" rx="3" fill="#1f6fc0" /><path d="M1 8c0 6 12 6 12 0M7 13v3M3 17h8" fill="none" stroke="#1f6fc0" strokeWidth="1.4" /></S></SogouSlot>
          <SogouSlot $ml={6}><S w={16} h={13} vb="0 0 16 13"><rect width="16" height="13" rx="1" fill="#1f6fc0" /><path d="M2 3h12M2 6h12" stroke="#fff" strokeDasharray="1.5 1" /><path d="M4 10h8" stroke="#fff" /></S></SogouSlot>
          <SogouSlot $ml={8}><S w={18} h={16} vb="0 0 18 16"><circle cx="6" cy="4" r="3" fill="#c8ccd0" /><path d="M1 15c0-7 8-7 9-3v3z" fill="#c8ccd0" /><rect x="7.5" y="8" width="10" height="7" fill="#fff" stroke="#a8b8c8" /></S></SogouSlot>
          <SogouSlot $ml={3}><S w={15} h={15} vb="0 0 15 15"><path d="M4 1l3 1 3-1 5 3-2 3-1-1v9H3V6L2 7 0 4z" fill="#1f6fc0" /></S></SogouSlot>
          <SogouSlot $ml={6}><S w={16} h={16}><path d="M1 14l7-7c-1-3 2-6 6-5l-3 3 2 2 3-3c1 4-2 7-5 6l-7 6z" fill="#1f6fc0" /></S></SogouSlot>
        </SogouBar>
      </Sogou>
    </Page>
  );
}
